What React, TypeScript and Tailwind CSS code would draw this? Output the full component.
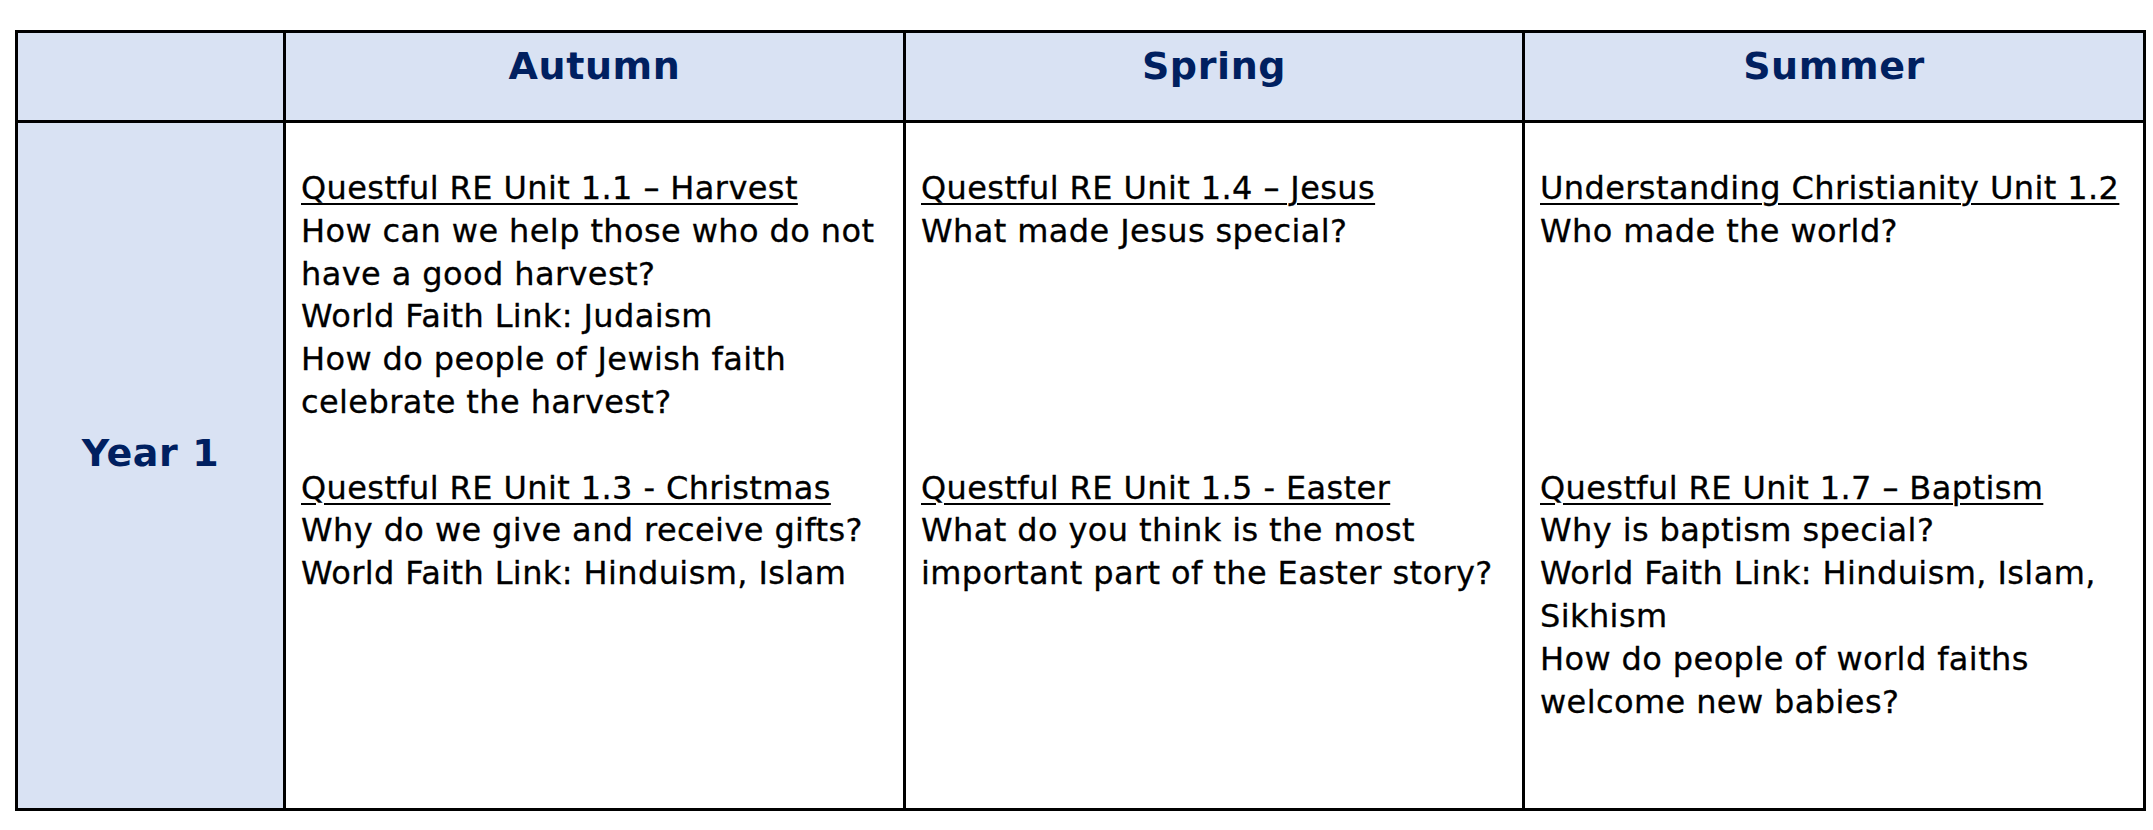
type Section = {
  title: string;
  lines: string[];
};

type Term = {
  name: string;
  first: Section;
  second: Section;
};

const terms: Term[] = [
  {
    name: "Autumn",
    first: {
      title: "Questful RE Unit 1.1 – Harvest",
      lines: [
        "How can we help those who do not",
        "have a good harvest?",
        "World Faith Link: Judaism",
        "How do people of Jewish faith",
        "celebrate the harvest?",
      ],
    },
    second: {
      title: "Questful RE Unit 1.3 - Christmas",
      lines: ["Why do we give and receive gifts?", "World Faith Link: Hinduism, Islam"],
    },
  },
  {
    name: "Spring",
    first: {
      title: "Questful RE Unit 1.4 – Jesus",
      lines: ["What made Jesus special?"],
    },
    second: {
      title: "Questful RE Unit 1.5 - Easter",
      lines: ["What do you think is the most", "important part of the Easter story?"],
    },
  },
  {
    name: "Summer",
    first: {
      title: "Understanding Christianity Unit 1.2",
      lines: ["Who made the world?"],
    },
    second: {
      title: "Questful RE Unit 1.7 – Baptism",
      lines: [
        "Why is baptism special?",
        "World Faith Link: Hinduism, Islam,",
        "Sikhism",
        "How do people of world faiths",
        "welcome new babies?",
      ],
    },
  },
];

const SectionText = ({ section }: { section: Section }) => (
  <div className="text-[32px] leading-[42.8px] tracking-[0.4px] text-black [-webkit-text-stroke:0.3px_#000]">
    <div className="whitespace-nowrap underline decoration-[2px] underline-offset-[4px]">
      {section.title}
    </div>
    {section.lines.map((line) => (
      <div key={line} className="whitespace-nowrap">
        {line}
      </div>
    ))}
  </div>
);

export default function App() {
  return (
    <div className="min-h-screen bg-white pl-[15px] pt-[30px]">
      <div className="grid w-[2131px] grid-cols-[268px_620px_619px_618px] border-[3px] border-black font-['DejaVu_Sans',sans-serif]">
        {/* Header row */}
        <div className="h-[90px] border-b-[3px] border-r-[3px] border-black bg-[#D9E2F3]" />
        {terms.map((term, i) => (
          <div
            key={term.name}
            className={`h-[90px] border-b-[3px] border-black bg-[#D9E2F3] pt-[11px] text-center text-[38px] font-bold leading-[44px] tracking-[0.6px] text-[#002060] ${
              i < terms.length - 1 ? "border-r-[3px]" : ""
            }`}
          >
            {term.name}
          </div>
        ))}

        {/* Year label */}
        <div className="row-span-2 flex items-center justify-center border-r-[3px] border-black bg-[#D9E2F3] pb-[26px] text-[38px] font-bold leading-[44px] tracking-[0.6px] text-[#002060]">
          Year 1
        </div>

        {/* First half of each term */}
        {terms.map((term, i) => (
          <div
            key={term.name + "-first"}
            className={`border-black pb-[42.8px] pl-[15px] pr-[10px] pt-[44px] ${
              i < terms.length - 1 ? "border-r-[3px]" : ""
            }`}
          >
            <SectionText section={term.first} />
          </div>
        ))}

        {/* Second half of each term */}
        {terms.map((term, i) => (
          <div
            key={term.name + "-second"}
            className={`border-black pb-[85px] pl-[15px] pr-[10px] ${
              i < terms.length - 1 ? "border-r-[3px]" : ""
            }`}
          >
            <SectionText section={term.second} />
          </div>
        ))}
      </div>
    </div>
  );
}
